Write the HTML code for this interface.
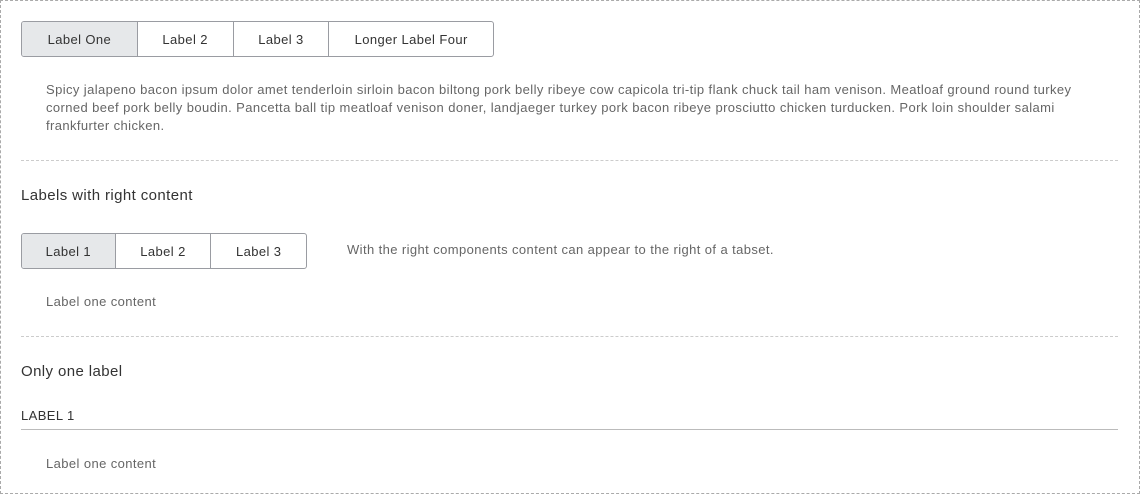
<!DOCTYPE html>
<html><head><style>
body{margin:0;width:1140px;height:494px;background:#fff;font-family:"Liberation Sans",sans-serif;position:relative;overflow:hidden;letter-spacing:0.4px}
.frame{position:absolute;left:0;top:0;width:1138px;height:492px;border:1px dashed #aaa}
.a{position:absolute;white-space:nowrap}
.tabs{position:absolute;display:flex;height:34px;border:1px solid #9a9ca2;border-radius:3px;overflow:hidden;box-sizing:border-box}
.tabs div{display:flex;align-items:center;justify-content:center;font-size:13px;color:#333;border-left:1px solid #9a9ca2;box-sizing:border-box;height:100%}
.tabs div:first-child{border-left:none;background:#e6e8ea}
.p{font-size:13px;color:#666;line-height:18px}
.sep{position:absolute;left:21px;width:1097px;border-top:1px dashed #ccc}
.h{font-size:15px;color:#333}
</style></head><body>
<div class="frame"></div>
<div class="tabs" style="left:21px;top:21px;width:473px;height:36px">
<div style="width:115px">Label One</div><div style="width:96px">Label 2</div><div style="width:96px">Label 3</div><div style="width:165px">Longer Label Four</div></div>
<div class="a p" style="left:46px;top:81px">Spicy jalapeno bacon ipsum dolor amet tenderloin sirloin bacon biltong pork belly ribeye cow capicola tri-tip flank chuck tail ham venison. Meatloaf ground round turkey<br>corned beef pork belly boudin. Pancetta ball tip meatloaf venison doner, landjaeger turkey pork bacon ribeye prosciutto chicken turducken. Pork loin shoulder salami<br>frankfurter chicken.</div>
<div class="sep" style="top:160px"></div>
<div class="a h" style="left:21px;top:187px">Labels with right content</div>
<div class="tabs" style="left:21px;top:233px;width:286px;height:36px">
<div style="width:93px">Label 1</div><div style="width:96px">Label 2</div><div style="width:96px">Label 3</div></div>
<div class="a p" style="left:347px;top:241px">With the right components content can appear to the right of a tabset.</div>
<div class="a p" style="left:46px;top:293px">Label one content</div>
<div class="sep" style="top:336px"></div>
<div class="a h" style="left:21px;top:363px">Only one label</div>
<div class="a" style="left:21px;top:408px;font-size:13px;color:#333">LABEL 1</div>
<div class="a" style="left:21px;top:429px;width:1097px;border-top:1px solid #bbb"></div>
<div class="a p" style="left:46px;top:455px">Label one content</div>
</body></html>
